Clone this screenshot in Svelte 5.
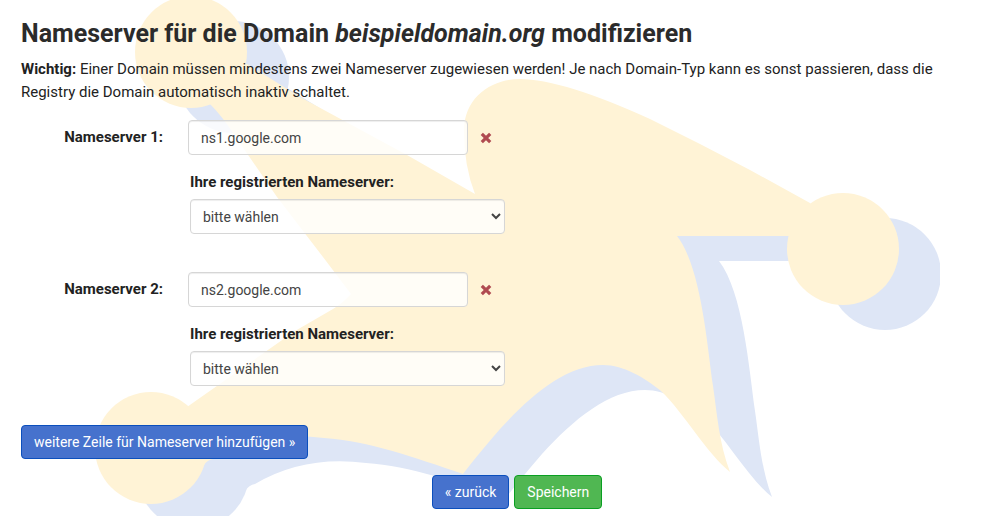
<script lang="ts">
  type Nameserver = {
    id: number;
    host: string;
    registered: string;
  };

  const domain = 'beispieldomain.org';

  let nextId = 3;
  let nameservers = $state<Nameserver[]>([
    { id: 1, host: 'ns1.google.com', registered: '' },
    { id: 2, host: 'ns2.google.com', registered: '' }
  ]);

  function addRow() {
    nameservers.push({ id: nextId++, host: '', registered: '' });
  }

  function removeRow(id: number) {
    nameservers = nameservers.filter((ns) => ns.id !== id);
  }
</script>

<main class="page">
  <!-- Jester hat watermark: the same shape twice, the blue one is its shadow -->
  <svg class="watermark" width="940" height="600" viewBox="0 0 940 600" aria-hidden="true">
    <defs>
      <g id="hat">
        <circle cx="191" cy="52" r="56" />
        <circle cx="843" cy="249" r="56" />
        <circle cx="151" cy="448" r="56" />
        <path
          d="M191 52 L210 104 Q222 116 233 133 L277 197 L323 257 L351 294 Q343 303 333 309 L295 331
            L187 407 L151 448 L203 466 Q207 460 213 459 Q262 430 324 438 C369 441 413 457 463 474
            Q475 458 500 429 C532 394 567 365 603 365 C624 365 645 378 661 391 C684 413 707 454 730 472
            C719 443 717 413 713 386 C707 343 701 267 677 236 L843 236 L810 203 L750 170 L700 144
            L650 119 Q562 79 520 79 C493 79 464 96 464 131 Q464 166 475 194 L407 155 L300 97 L247 64 Z"
        />
      </g>
    </defs>
    <use href="#hat" x="42" y="25" class="shadow" />
    <use href="#hat" class="hat" />
  </svg>

  <form class="content" onsubmit={(e) => e.preventDefault()}>
    <h1>Nameserver für die Domain <em>{domain}</em> modifizieren</h1>
    <p class="hint">
      <strong>Wichtig:</strong> Einer Domain müssen mindestens zwei Nameserver zugewiesen werden! Je nach
      Domain-Typ kann es sonst passieren, dass die Registry die Domain automatisch inaktiv schaltet.
    </p>

    <div class="rows">
      {#each nameservers as ns, i (ns.id)}
        <div class="row">
          <label class="row-label" for="host-{ns.id}">Nameserver {i + 1}:</label>
          <div class="fields">
            <div class="host">
              <input id="host-{ns.id}" class="control" type="text" bind:value={ns.host} />
              <button
                type="button"
                class="remove"
                aria-label="Nameserver {i + 1} entfernen"
                onclick={() => removeRow(ns.id)}
              >
                <svg width="12" height="12" viewBox="0 0 12 12" aria-hidden="true">
                  <path d="M1.8 1.8 L10.2 10.2 M10.2 1.8 L1.8 10.2" />
                </svg>
              </button>
            </div>
            <div class="registered">
              <label for="registered-{ns.id}">Ihre registrierten Nameserver:</label>
              <select id="registered-{ns.id}" class="control" bind:value={ns.registered}>
                <option value="">bitte wählen</option>
              </select>
            </div>
          </div>
        </div>
      {/each}
    </div>

    <button type="button" class="btn primary" onclick={addRow}>
      weitere Zeile für Nameserver hinzufügen »
    </button>

    <div class="actions">
      <button type="button" class="btn primary">« zurück</button>
      <button type="submit" class="btn success">Speichern</button>
    </div>
  </form>
</main>

<style>
  :global(body) {
    margin: 0;
    background: #fff;
  }

  .page {
    position: relative;
    overflow: hidden;
    min-height: 100vh;
    font-family: Roboto, 'Liberation Sans', sans-serif;
    font-size: 15px;
    line-height: 23px;
    color: #222;
  }

  .watermark {
    position: absolute;
    top: 0;
    left: 0;
  }

  .hat {
    fill: #fff3d6;
  }

  .shadow {
    fill: #dee6f6;
  }

  .content {
    position: relative;
    padding: 18px 21px 7px;
  }

  h1 {
    margin: 0 0 9px;
    font-size: 25px;
    line-height: 31px;
    font-weight: 700;
    color: #2b2b2b;
  }

  .hint {
    margin: 0 0 16px;
  }

  .rows {
    display: grid;
    gap: 38px;
    margin-bottom: 39px;
  }

  .row {
    display: grid;
    grid-template-columns: 142px minmax(0, 1fr);
    column-gap: 25px;
  }

  .row-label {
    padding-top: 6px;
    text-align: right;
  }

  label {
    font-weight: 700;
  }

  .host {
    display: flex;
    align-items: center;
    gap: 12px;
    margin-bottom: 16px;
  }

  .registered {
    display: flex;
    flex-direction: column;
    align-items: flex-start;
    gap: 5px;
    padding-left: 2px;
  }

  .control {
    box-sizing: border-box;
    height: 35px;
    padding: 6px 12px;
    border: 1px solid #d6d6d6;
    border-radius: 4px;
    background-color: rgba(255, 255, 255, 0.8);
    box-shadow: inset 0 1px 1px rgba(0, 0, 0, 0.07);
    font: inherit;
    font-size: 14px;
    color: #444;
  }

  input.control {
    width: 280px;
  }

  select.control {
    width: 315px;
    padding: 5px 6px 5px 8px;
  }

  .remove {
    display: flex;
    padding: 0;
    border: 0;
    background: none;
    cursor: pointer;
  }

  .remove path {
    fill: none;
    stroke: #b04a50;
    stroke-width: 3.2;
  }

  .btn {
    height: 34px;
    padding: 0 12px;
    border: 1px solid;
    border-radius: 4px;
    font: inherit;
    font-size: 14px;
    color: #fff;
    cursor: pointer;
  }

  .primary {
    background: #4672cd;
    border-color: #0b4fbd;
  }

  .success {
    background: #50b752;
    border-color: #0a9f22;
  }

  .actions {
    display: flex;
    justify-content: center;
    gap: 5px;
    margin-top: 16px;
    padding-left: 34px;
  }
</style>
